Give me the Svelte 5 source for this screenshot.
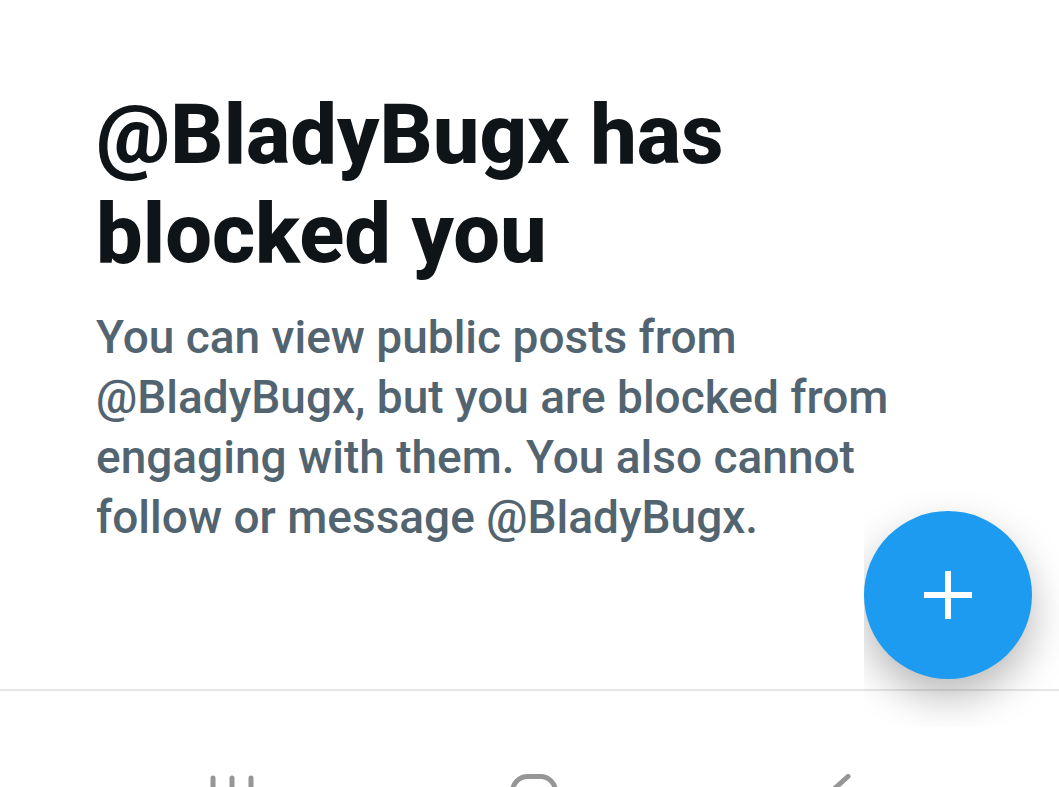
<script>
  const user = '@BladyBugx';
</script>

<div class="screen">
  <main>
    <h1>{user} has blocked you</h1>
    <p>You can view public posts from {user}, but you are blocked from engaging with them. You also cannot follow or message {user}.</p>
  </main>
  <button class="compose" aria-label="New post">
    <svg viewBox="0 0 48 48" aria-hidden="true"><path d="M24 0v48M0 24h48" /></svg>
  </button>
  <nav>
    <button aria-label="Recent apps">
      <svg viewBox="0 0 48 48" aria-hidden="true"><path d="M4 4v40M23 4v40M42 4v40" /></svg>
    </button>
    <button aria-label="Home">
      <svg viewBox="0 0 48 48" aria-hidden="true"><rect x="2.500" y="2.500" width="43" height="43" rx="15" /></svg>
    </button>
    <button aria-label="Back">
      <svg viewBox="0 0 48 48" aria-hidden="true"><path d="M37 2.500L13 24l24 21.500" /></svg>
    </button>
  </nav>
</div>

<style>
  :global(body) { margin: 0; background: #fff; overflow: hidden; }
  .screen {
    position: relative;
    height: 100vh;
    display: flex;
    flex-direction: column;
    overflow: hidden;
    font-family: Roboto, "Liberation Sans", sans-serif;
  }
  main { padding: 85px 96px 142px; flex: none; }
  h1 {
    margin: 0;
    max-width: 700px;
    font-size: 83px;
    line-height: 99px;
    font-weight: 800;
    color: #0f1419;
  }
  p {
    margin: 24px 0 0;
    max-width: 810px;
    font-size: 46px;
    line-height: 60px;
    font-weight: 500;
    color: #536471;
  }
  button { padding: 0; border: 0; background: none; }
  svg { display: block; width: 48px; height: 48px; fill: none; }
  .compose {
    position: absolute;
    right: 27px;
    bottom: 108px;
    width: 168px;
    height: 168px;
    display: grid;
    place-items: center;
    border-radius: 50%;
    background: #1d9bf0;
    box-shadow: 0 18px 40px rgb(0 0 0 / 28%);
    clip-path: inset(-36px -27px -48px 0);
  }
  .compose svg { stroke: #fff; stroke-width: 6; }
  nav {
    position: relative;
    flex: none;
    display: flex;
    justify-content: space-around;
    padding: 83px 74px 0 82px;
    border-top: 2px solid rgb(15 30 45 / 11%);
  }
  nav svg { stroke: #969696; stroke-width: 5; stroke-linecap: round; stroke-linejoin: round; }
</style>
